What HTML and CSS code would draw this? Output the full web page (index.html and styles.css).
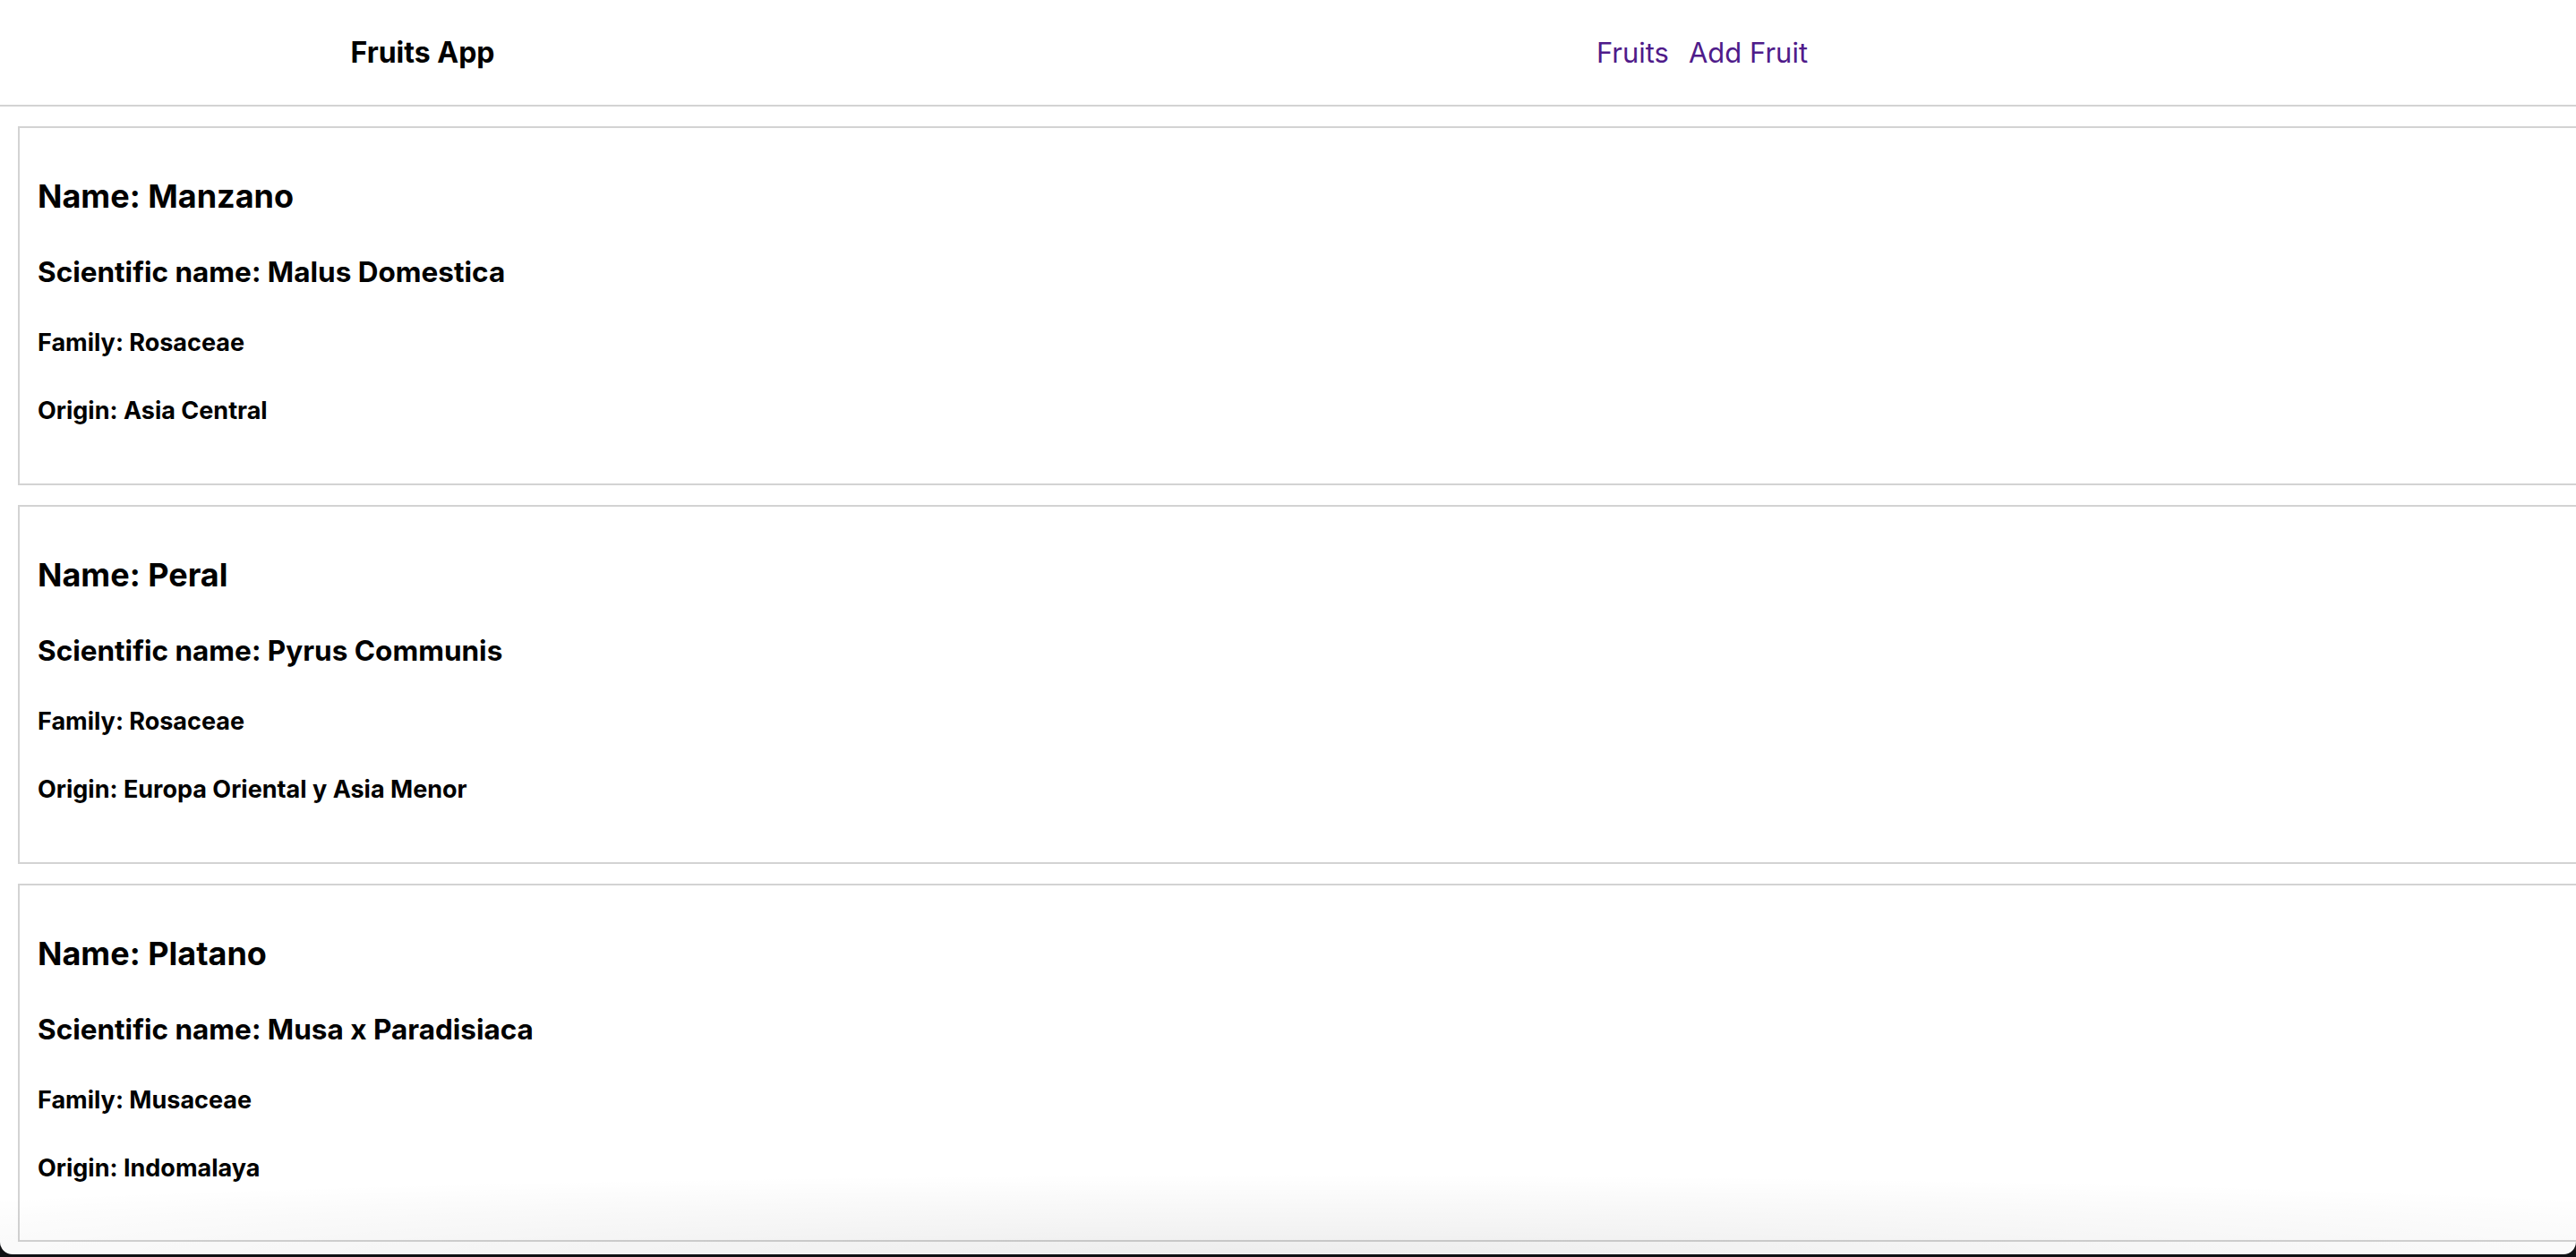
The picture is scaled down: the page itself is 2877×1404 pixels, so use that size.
FILE: index.html
```html
<!DOCTYPE html>
<html lang="en">
<head>
<meta charset="utf-8">
<title>Fruits App</title>
<link rel="stylesheet" href="styles.css">
</head>
<body>
<div class="window">
  <header class="topbar">
    <div class="brand">Fruits App</div>
    <nav class="nav">
      <a class="nav-link" href="#">Fruits</a>
      <a class="nav-link" href="#">Add Fruit</a>
    </nav>
  </header>
  <main class="list">
    <section class="card">
      <h2 class="card-name">Name: Manzano</h2>
      <h3 class="card-sci">Scientific name: Malus Domestica</h3>
      <h4 class="card-detail">Family: Rosaceae</h4>
      <h4 class="card-detail">Origin: Asia Central</h4>
    </section>
    <section class="card">
      <h2 class="card-name">Name: Peral</h2>
      <h3 class="card-sci">Scientific name: Pyrus Communis</h3>
      <h4 class="card-detail">Family: Rosaceae</h4>
      <h4 class="card-detail">Origin: Europa Oriental y Asia Menor</h4>
    </section>
    <section class="card">
      <h2 class="card-name">Name: Platano</h2>
      <h3 class="card-sci">Scientific name: Musa x Paradisiaca</h3>
      <h4 class="card-detail">Family: Musaceae</h4>
      <h4 class="card-detail">Origin: Indomalaya</h4>
    </section>
  </main>
  <div class="bottom-shade"></div>
</div>
</body>
</html>
```

FILE: styles.css
```css
html {
  margin: 0;
  padding: 0;
  height: 100%;
  background: #101114;
}

body {
  margin: 0;
  padding: 0;
  height: 100%;
  overflow: hidden;
  font-family: Inter, "Noto Sans", "Liberation Sans", sans-serif;
  color: #000;
}

.window {
  position: relative;
  height: 1401px;
  background: #fff;
  border-radius: 0 0 14px 14px;
}

.topbar {
  display: grid;
  grid-template-columns: 944px 1914px;
  align-items: center;
  justify-items: center;
  height: 117px;
  border-bottom: 2px solid #d3d3d3;
}

.brand {
  font-size: 32px;
  font-weight: 700;
}

.nav {
  display: flex;
  gap: 22px;
}

.nav-link {
  font-size: 31px;
  color: #4f1b8a;
  text-decoration: none;
}

.list {
  display: flex;
  flex-direction: column;
  gap: 22px;
  padding: 22px 0 0 20px;
}

.card {
  display: flex;
  flex-direction: column;
  gap: 44px;
  border-top: 2px solid #d3d3d3;
  border-bottom: 2px solid #d3d3d3;
  border-left: 2px solid #d3d3d3;
  padding: 55px 20px 64px;
}

.card h2, .card h3, .card h4 {
  margin: 0;
  line-height: 1.2;
  font-weight: 700;
}

.card-name {
  font-size: 36px;
}

.card-sci {
  font-size: 31.5px;
}

.card-detail {
  font-size: 27px;
}

.bottom-shade {
  position: absolute;
  left: 0;
  right: 0;
  bottom: 0;
  height: 90px;
  border-radius: 0 0 14px 14px;
  background: radial-gradient(ellipse 70% 100% at 50% 100%, rgba(0,0,0,0.07), rgba(0,0,0,0) 100%);
  pointer-events: none;
}
```
